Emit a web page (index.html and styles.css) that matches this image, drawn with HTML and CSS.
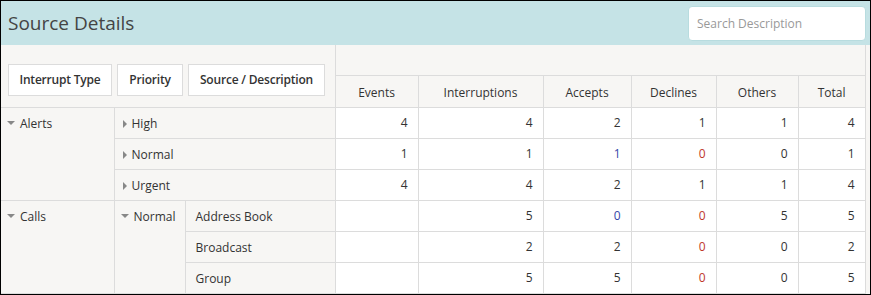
FILE: index.html
```html
<!DOCTYPE html>
<html lang="en">
<head>
    <meta charset="UTF-8">
    <meta name="viewport" content="width=device-width, initial-scale=1.0">
    <title>Source Details</title>
    <link rel="stylesheet" href="styles.css">
</head>
<body>
    <div class="frame">
        <div class="title-bar">
            <h1>Source Details</h1>
            <input class="search" type="text" placeholder="Search Description">
        </div>

        <table class="pivot">
            <colgroup>
                <col style="width: 113px">
                <col style="width: 71px">
                <col style="width: 150px">
                <col style="width: 83px">
                <col style="width: 125px">
                <col style="width: 88px">
                <col style="width: 85px">
                <col style="width: 82px">
                <col style="width: 67px">
            </colgroup>
            <thead>
                <tr class="head-top">
                    <th class="fields" colspan="3" rowspan="2">
                        <div class="field-list">
                            <span class="field">Interrupt Type</span>
                            <span class="field">Priority</span>
                            <span class="field">Source / Description</span>
                        </div>
                    </th>
                    <th class="blank" colspan="6"></th>
                </tr>
                <tr class="head-cols">
                    <th>Events</th>
                    <th>Interruptions</th>
                    <th>Accepts</th>
                    <th>Declines</th>
                    <th>Others</th>
                    <th>Total</th>
                </tr>
            </thead>
            <tbody>
                <tr class="group-start">
                    <td class="label" rowspan="3"><span class="caret open"></span>Alerts</td>
                    <td class="label" colspan="2"><span class="caret"></span>High</td>
                    <td class="num">4</td>
                    <td class="num">4</td>
                    <td class="num">2</td>
                    <td class="num">1</td>
                    <td class="num">1</td>
                    <td class="num">4</td>
                </tr>
                <tr>
                    <td class="label" colspan="2"><span class="caret"></span>Normal</td>
                    <td class="num">1</td>
                    <td class="num">1</td>
                    <td class="num blue">1</td>
                    <td class="num red">0</td>
                    <td class="num">0</td>
                    <td class="num">1</td>
                </tr>
                <tr>
                    <td class="label" colspan="2"><span class="caret"></span>Urgent</td>
                    <td class="num">4</td>
                    <td class="num">4</td>
                    <td class="num">2</td>
                    <td class="num">1</td>
                    <td class="num">1</td>
                    <td class="num">4</td>
                </tr>
                <tr class="group-start">
                    <td class="label" rowspan="3"><span class="caret open"></span>Calls</td>
                    <td class="label" rowspan="3"><span class="caret open"></span>Normal</td>
                    <td class="label leaf">Address Book</td>
                    <td class="num"></td>
                    <td class="num">5</td>
                    <td class="num blue">0</td>
                    <td class="num red">0</td>
                    <td class="num">5</td>
                    <td class="num">5</td>
                </tr>
                <tr>
                    <td class="label leaf">Broadcast</td>
                    <td class="num"></td>
                    <td class="num">2</td>
                    <td class="num">2</td>
                    <td class="num red">0</td>
                    <td class="num">0</td>
                    <td class="num">2</td>
                </tr>
                <tr>
                    <td class="label leaf">Group</td>
                    <td class="num"></td>
                    <td class="num">5</td>
                    <td class="num">5</td>
                    <td class="num red">0</td>
                    <td class="num">0</td>
                    <td class="num">5</td>
                </tr>
            </tbody>
        </table>
    </div>
</body>
</html>
```

FILE: styles.css
```css
* {
    box-sizing: border-box;
}
body {
    margin: 0;
    font-family: 'Open Sans', 'Noto Sans', sans-serif;
    font-size: 12px;
    color: #333;
}
.frame {
    width: 871px;
    height: 295px;
    border: 1px solid #000;
    background: #f7f6f4;
    overflow: hidden;
}
.title-bar {
    height: 44px;
    background: #c5e3e6;
    display: flex;
    align-items: center;
    justify-content: space-between;
    padding: 0 4px 0 7px;
}
.title-bar h1 {
    margin: 0;
    font-size: 19px;
    font-weight: normal;
    color: #444;
}
.search {
    width: 178px;
    height: 35px;
    margin-top: 1px;
    border: 1px solid #b8dcdf;
    border-radius: 4px;
    background: #fff;
    padding: 0 8px;
    font-family: inherit;
    font-size: 12px;
}
.search::placeholder {
    color: #999;
}
.pivot {
    border-collapse: collapse;
    table-layout: fixed;
    width: 864px;
}
.pivot th,
.pivot td {
    border: 1px solid #dcdcdc;
    padding: 0;
}
.pivot tr:first-child th {
    border-top: none;
}
.pivot tr > :first-child {
    border-left: none;
}
.head-top {
    height: 30px;
}
.head-cols {
    height: 32px;
}
.head-cols th {
    font-weight: normal;
    padding-top: 3px;
}
.fields {
    vertical-align: top;
    padding: 19px 0 0 7px !important;
}
.field-list {
    display: flex;
    gap: 5px;
}
.field {
    flex: none;
    background: #fff;
    border: 1px solid #dcdcdc;
    height: 32px;
    line-height: 30px;
    text-align: center;
    white-space: nowrap;
    font-weight: 600;
    font-size: 12px;
    letter-spacing: -0.2px;
    color: #333;
}
.field:first-child {
    width: 104px;
}
.field:nth-child(2) {
    width: 66px;
}
.field:nth-child(3) {
    width: 137px;
}
tbody tr {
    height: 31px;
}
.label {
    vertical-align: top;
    padding: 7px 0 0 6px !important;
    white-space: nowrap;
}
.label.leaf {
    padding-left: 10px !important;
}
.num {
    background: #fff;
    text-align: right;
    padding-right: 10px !important;
}
.blue {
    color: #3446a8;
}
.red {
    color: #c0392b;
}
.caret {
    display: inline-block;
    width: 0;
    height: 0;
    margin: 0 5px 1px 2px;
    border-top: 4px solid transparent;
    border-bottom: 4px solid transparent;
    border-left: 4px solid #888;
    vertical-align: middle;
}
.caret.open {
    margin: 0 5px 2px 0;
    border-left: 4px solid transparent;
    border-right: 4px solid transparent;
    border-top: 4px solid #888;
    border-bottom: none;
}
```
